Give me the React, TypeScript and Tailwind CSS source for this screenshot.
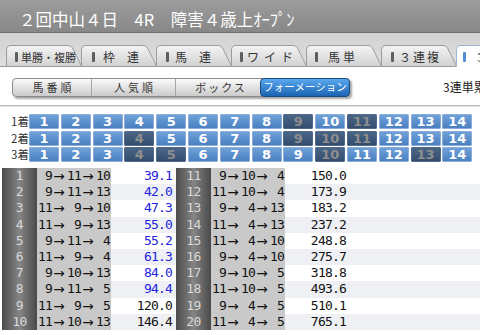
import React from "react";

const jp = "font-['Noto_Sans_CJK_JP',sans-serif]";
const mono = "font-['DejaVu_Sans_Mono',monospace]";

const tabs = [
  { label: "単勝・複勝", cls: "ml-[3px] text-[11px]", pl: "pl-[9px]" },
  { label: "枠　連", cls: "ml-[8px] text-[12px]", pl: "pl-[11px]" },
  { label: "馬　連", cls: "ml-[6px] text-[12px]", pl: "pl-[10px]" },
  { label: "ワイド", cls: "ml-[4px] text-[12px] tracking-[5px]", pl: "pl-[9px]" },
  { label: "馬単", cls: "ml-[10px] text-[12px] tracking-[3px]", pl: "pl-[9px]" },
  { label: "３連複", cls: "ml-[5px] text-[12px] tracking-[2px]", pl: "pl-[10px]" },
  { label: "３連単", cls: "ml-[9px] text-[12px] tracking-[2px]", pl: "pl-[7px]", active: true },
];

const selected = [
  [9, 11],
  [4, 9, 10, 11],
  [4, 5, 10, 13],
];

const rows: [number, number[], string][] = [
  [1, [9, 11, 10], "39.1"],
  [2, [9, 11, 13], "42.0"],
  [3, [11, 9, 10], "47.3"],
  [4, [11, 9, 13], "55.0"],
  [5, [9, 11, 4], "55.2"],
  [6, [11, 9, 4], "61.3"],
  [7, [9, 10, 13], "84.0"],
  [8, [9, 11, 5], "94.4"],
  [9, [11, 9, 5], "120.0"],
  [10, [11, 10, 13], "146.4"],
  [11, [9, 10, 4], "150.0"],
  [12, [11, 10, 4], "173.9"],
  [13, [9, 4, 13], "183.2"],
  [14, [11, 4, 13], "237.2"],
  [15, [11, 4, 10], "248.8"],
  [16, [9, 4, 10], "275.7"],
  [17, [9, 10, 5], "318.8"],
  [18, [11, 10, 5], "493.6"],
  [19, [9, 4, 5], "510.1"],
  [20, [11, 4, 5], "765.1"],
];

function Tab({ i, label, cls, pl, active }: { i: number; label: string; cls: string; pl: string; active?: boolean }) {
  return (
    <div className={`relative h-[21px] w-[75px] shrink-0 ${active ? "z-10 mb-[-1px] h-[22px]" : ""}`}>
      <svg className="absolute left-0 top-0 overflow-visible" width="76" height={active ? 22 : 21}>
        <defs>
          <linearGradient id={`tg${i}`} x1="0" y1="0" x2="0" y2="1">
            <stop offset="0" stopColor={active ? "#ffffff" : "#f4f4f4"} />
            <stop offset="1" stopColor={active ? "#ffffff" : "#d2d2d2"} />
          </linearGradient>
        </defs>
        <path
          d={`M0.5 ${active ? 22 : 21} L0.5 5 Q0.5 0.5 5 0.5 L62 0.5 Q65 0.5 66.5 3 L75.5 ${active ? 22 : 21}`}
          fill={`url(#tg${i})`}
          stroke={active ? "#9fb6cf" : "#9c9c9c"}
        />
      </svg>
      <div className={`relative flex h-[21px] items-center pt-[2px] leading-[16px] text-[#333] ${pl}`}>
        <span className={`h-[10px] w-[3px] rounded-[1px] ${active ? "bg-[#4f8fd6]" : "bg-[#5e5e5e]"}`} />
        <span className={`${cls} whitespace-nowrap`}>{label}</span>
      </div>
    </div>
  );
}

function Seg({ w, children, extra = "" }: { w: string; children: React.ReactNode; extra?: string }) {
  return (
    <div className={`flex h-full items-center justify-center border-r border-[#a6a6a6] text-[11px] leading-[16px] text-[#333] ${w} ${extra}`}>
      {children}
    </div>
  );
}

function Combo({ n }: { n: number[] }) {
  return (
    <div className={`flex h-full items-center justify-end pr-[1px] text-[13px] leading-[16px] tracking-[-0.8px] text-[#111] ${mono}`}>
      <span className="inline-block w-[15px] text-right">{n[0]}</span>
      <span className="inline-block w-[14px] text-center font-['DejaVu_Sans',sans-serif] text-[13.5px] tracking-normal">→</span>
      <span className="inline-block w-[15px] text-right">{n[1]}</span>
      <span className="inline-block w-[14px] text-center font-['DejaVu_Sans',sans-serif] text-[13.5px] tracking-normal">→</span>
      <span className="inline-block w-[15px] text-right">{n[2]}</span>
    </div>
  );
}

function NumCell({ n }: { n: number }) {
  return (
    <div className={`flex w-[35px] items-center justify-center bg-gradient-to-r from-[#4c4c4c] via-[#858585] to-[#4a4a4a] text-[13px] tracking-[-0.5px] text-[#d9d9d9] ${mono}`}>
      {n}
    </div>
  );
}

export default function App() {
  const left = rows.slice(0, 10);
  const right = rows.slice(10);
  return (
    <div className={`h-[335px] w-[480px] overflow-hidden bg-white ${jp}`}>
      {/* title */}
      <div className="h-[33px] border-b border-[#6c6c6c] bg-gradient-to-b from-[#9c9c9c] to-[#888888] pl-[19px] pt-[9px] text-[16.5px] leading-[20px] whitespace-nowrap text-white">
        ２回中山４日　4R　障害４歳上ｵｰﾌﾟﾝ
      </div>

      {/* tabs */}
      <div className="flex h-[34px] items-end border-b border-[#9c9c9c] bg-gradient-to-b from-[#d2d2d2] to-[#dedede] pl-[6px]">
        {tabs.map((t, i) => (
          <Tab key={t.label} i={i} {...t} />
        ))}
      </div>

      {/* sort buttons */}
      <div className="flex h-[38px] items-center pl-[12px] pt-[2px]">
        <div className="flex h-[19px] w-[338px] rounded-[4px] border border-[#8c8c8c] bg-gradient-to-b from-[#fbfbfb] to-[#cbcbcb] shadow-[2px_2px_2px_rgba(0,0,0,0.35)]">
          <Seg w="w-[79px]" extra="tracking-[3px] pl-[3px]">馬番順</Seg>
          <Seg w="w-[84px]" extra="tracking-[3px] pl-[3px]">人気順</Seg>
          <Seg w="w-[84px]" extra="tracking-[2px] pl-[6px] border-r-0">ボックス</Seg>
          <div className="-my-px -mr-px flex flex-1 items-center justify-center rounded-[4px] border border-[#1b4a80] bg-gradient-to-b from-[#5aa8ee] to-[#1a64b3] text-[10.5px] leading-[16px] text-white">
            フォーメーション
          </div>
        </div>
        <div className="ml-auto w-[37px] overflow-hidden whitespace-nowrap text-[12px] text-[#222]">3連単累計</div>
      </div>

      <div className="h-[2px] border-t border-[#b9b9b9] bg-[#e6e6e6]" />

      {/* horse grid */}
      <div className="flex flex-col gap-y-[1.5px] pt-[7px]">
        {selected.map((sel, r) => (
          <div key={r} className="flex h-[15px] items-center">
            <div className="w-[29px] pl-[11px] text-[11.5px] leading-[15px] text-[#333]">{r + 1}着</div>
            <div className="grid grid-cols-[repeat(14,30px)] gap-x-[1.8px]">
              {Array.from({ length: 14 }, (_, k) => k + 1).map((n) => {
                const on = sel.includes(n);
                return (
                  <div
                    key={n}
                    className={`flex h-[15px] items-center justify-center rounded-[1px] border font-['DejaVu_Sans',sans-serif] text-[13px] font-bold leading-none ${
                      on
                        ? "border-[#52698a] bg-gradient-to-b from-[#4b6587] to-[#334d6e] text-[#8e8e8e]"
                        : "border-[#8aaed9] bg-gradient-to-b from-[#70a1d8] to-[#4a80c1] text-white"
                    }`}
                  >
                    {n}
                  </div>
                );
              })}
            </div>
          </div>
        ))}
      </div>

      {/* odds table */}
      <div className="ml-[2px] mt-[6px] flex flex-col leading-[16px]">
        {left.map((l, k) => {
          const r = right[k];
          const stripe = k % 2 === 1 ? "bg-[#eef0f4]" : "bg-white";
          return (
            <div key={k} className="flex h-[16.2px]">
              <NumCell n={l[0]} />
              <div className="w-[74px] bg-[#c9c9c9]">
                <Combo n={l[1]} />
              </div>
              <div className={`w-[65px] pr-[4px] text-right text-[13px] tracking-[-0.8px] ${mono} ${stripe} ${parseFloat(l[2]) < 100 ? "text-[#2323e0]" : "text-[#111]"}`}>
                {l[2]}
              </div>
              <NumCell n={r[0]} />
              <div className="w-[74px] bg-[#c9c9c9]">
                <Combo n={r[1]} />
              </div>
              <div className={`flex-1 ${stripe}`}>
                <div className={`w-[65px] pr-[4px] text-right text-[13px] tracking-[-0.8px] text-[#111] ${mono}`}>{r[2]}</div>
              </div>
            </div>
          );
        })}
      </div>
    </div>
  );
}
